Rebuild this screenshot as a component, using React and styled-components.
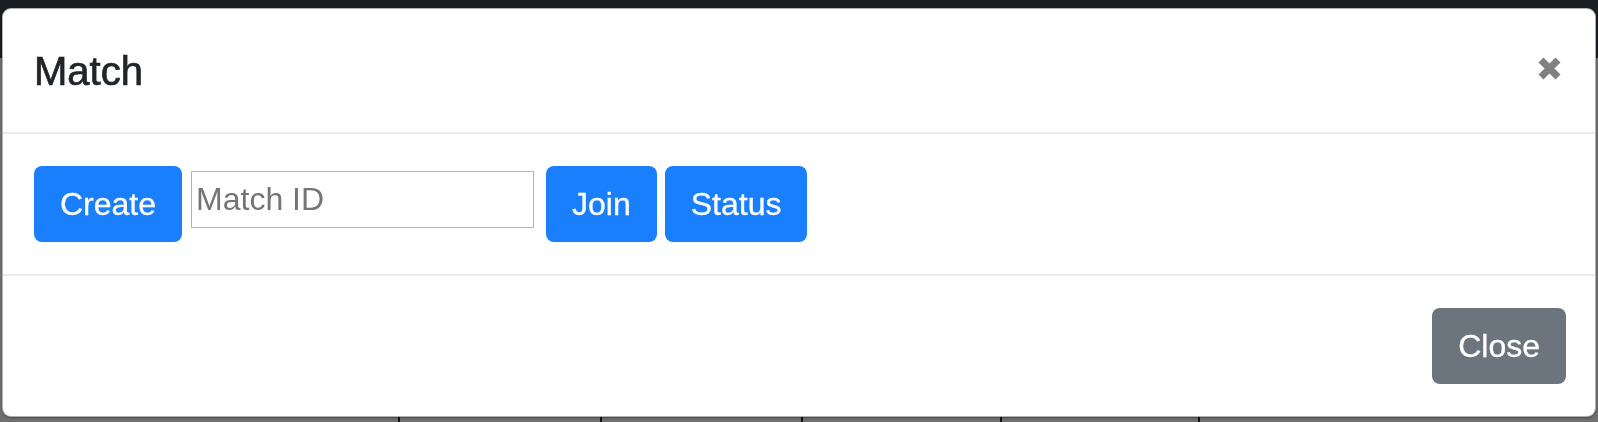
import React from 'react'
import styled, { createGlobalStyle } from 'styled-components'

const GlobalStyle = createGlobalStyle`
  html, body {
    margin: 0;
    padding: 0;
    height: 100%;
    overflow: hidden;
  }
  body {
    font-family: "Liberation Sans", Arial, sans-serif;
  }
`;

const Page = styled.div`
  width: 100vw;
  height: 100vh;
  display: flex;
  flex-direction: column;
  background: #6f6f6f;
`;

const NavBar = styled.div`
  height: 58px;
  background: #1b1e21;
`;

const Content = styled.div`
  flex: 1;
  display: flex;
  flex-direction: column;
  justify-content: flex-end;
`;

const CellRow = styled.div`
  height: 6px;
  display: flex;
`;

const Cell = styled.div`
  width: ${p => p.w}px;
  border-left: ${p => (p.first ? 'none' : '2px solid #111')};
`;

const Overlay = styled.div`
  position: fixed;
  inset: 0;
  padding: 8px 2px 0 2px;
`;

const Dialog = styled.div`
  background: #fff;
  border: 1px solid rgba(0, 0, 0, 0.3);
  border-radius: 9px;
  box-shadow: 0 1px 2px rgba(0, 0, 0, 0.35);
  display: flex;
  flex-direction: column;
`;

const Header = styled.div`
  display: flex;
  justify-content: space-between;
  align-items: flex-start;
  padding: 32px 33px 31px 31px;
  border-bottom: 2px solid #e9ecef;
`;

const Title = styled.h5`
  margin: 0;
  font-size: 40px;
  line-height: 60px;
  font-weight: 500;
  color: #212529;
  -webkit-text-stroke: 0.7px #212529;
`;

const CloseX = styled.button`
  border: 0;
  background: none;
  padding: 0;
  margin-top: 15px;
  width: 25px;
  height: 25px;
  display: flex;
  cursor: pointer;
`;

const Body = styled.div`
  display: flex;
  align-items: flex-start;
  padding: 32px 31px;
  border-bottom: 2px solid #e9ecef;
`;

const Footer = styled.div`
  display: flex;
  justify-content: flex-end;
  padding: 32px 29px 32px 31px;
`;

const Button = styled.button`
  height: 76px;
  padding: 12px 24px;
  border: 2px solid transparent;
  border-radius: 8px;
  background: ${p => (p.variant === 'secondary' ? '#6c757d' : '#1a7ffd')};
  color: #fff;
  font-family: "Liberation Sans", Arial, sans-serif;
  font-size: 32px;
  line-height: 48px;
  margin-left: ${p => p.ml || 0}px;
  -webkit-text-stroke: 0.3px #fff;
  cursor: pointer;
`;

const MatchInput = styled.input`
  box-sizing: border-box;
  width: 343px;
  height: 57px;
  margin: 5px 0 0 9px;
  padding: 0 4px;
  border: 1px solid #b4b4b4;
  font-family: "Liberation Sans", Arial, sans-serif;
  font-size: 32px;
  color: #212529;
  outline: none;
  &::placeholder {
    color: #757575;
  }
`;

const cells = [401, 201, 200, 198, 197, 401];

export default function App() {
  return (
    <>
      <GlobalStyle />
      <Page>
        <NavBar />
        <Content>
          <CellRow>
            {cells.map((w, i) => (
              <Cell key={i} w={w} first={i === 0} />
            ))}
          </CellRow>
        </Content>
      </Page>
      <Overlay>
        <Dialog>
          <Header>
            <Title>Match</Title>
            <CloseX aria-label="Close">
              <svg width="25" height="25" viewBox="0 0 25 25">
                <path d="M4 4 L21 21 M21 4 L4 21" stroke="#808080" strokeWidth="7" fill="none" />
              </svg>
            </CloseX>
          </Header>
          <Body>
            <Button>Create</Button>
            <MatchInput placeholder="Match ID" />
            <Button ml={12}>Join</Button>
            <Button ml={8}>Status</Button>
          </Body>
          <Footer>
            <Button variant="secondary">Close</Button>
          </Footer>
        </Dialog>
      </Overlay>
    </>
  )
}
